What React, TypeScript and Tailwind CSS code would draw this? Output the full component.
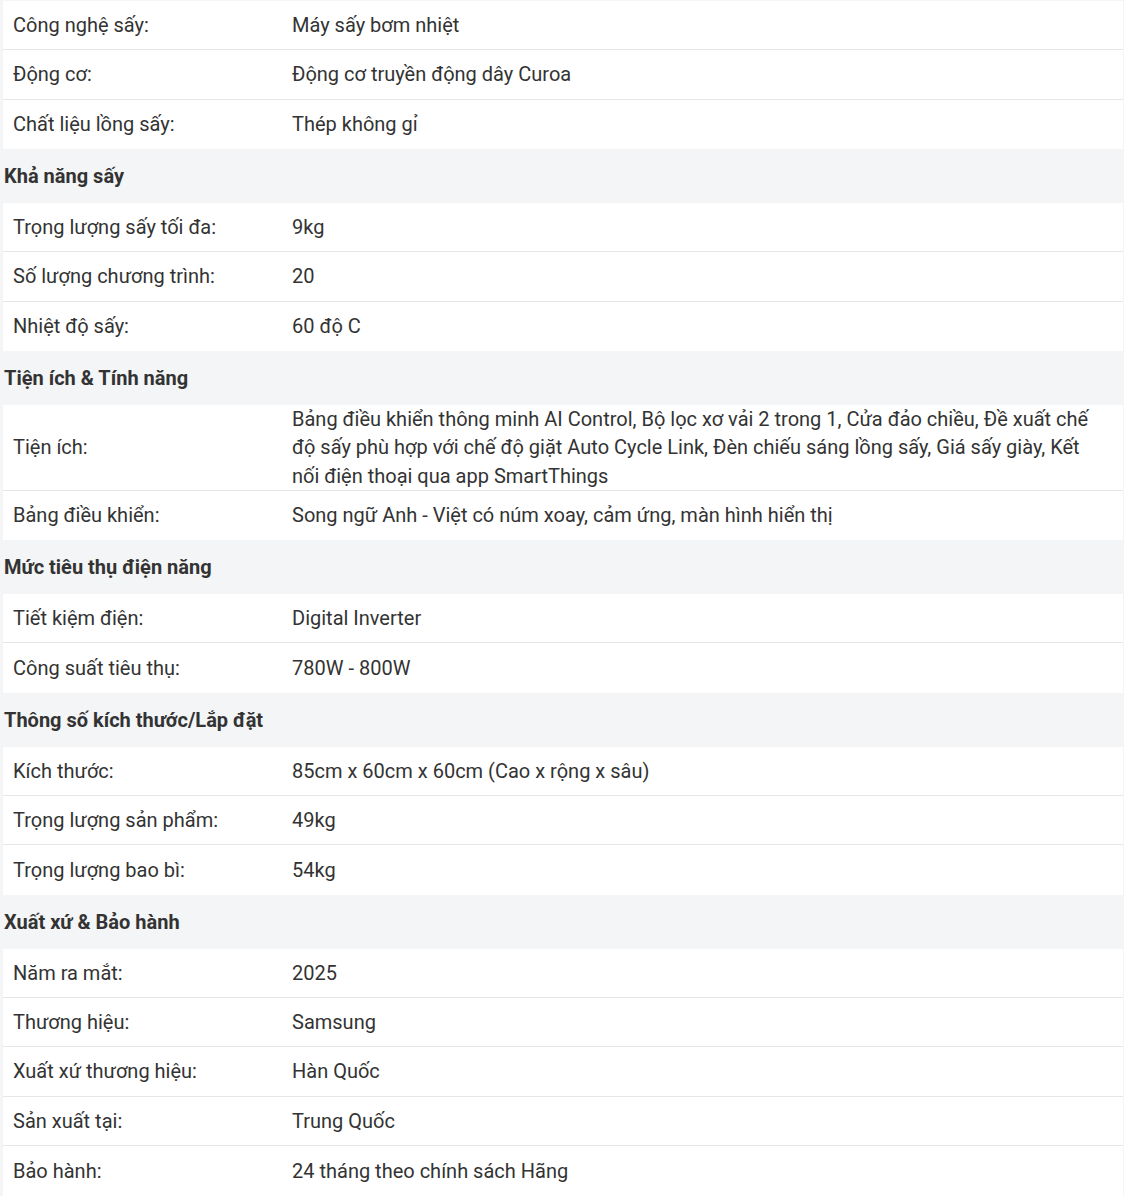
const sections: { title?: string; rows: [string, string][] }[] = [
  {
    rows: [
      ["Công nghệ sấy:", "Máy sấy bơm nhiệt"],
      ["Động cơ:", "Động cơ truyền động dây Curoa"],
      ["Chất liệu lồng sấy:", "Thép không gỉ"],
    ],
  },
  {
    title: "Khả năng sấy",
    rows: [
      ["Trọng lượng sấy tối đa:", "9kg"],
      ["Số lượng chương trình:", "20"],
      ["Nhiệt độ sấy:", "60 độ C"],
    ],
  },
  {
    title: "Tiện ích & Tính năng",
    rows: [
      [
        "Tiện ích:",
        "Bảng điều khiển thông minh AI Control, Bộ lọc xơ vải 2 trong 1, Cửa đảo chiều, Đề xuất chế độ sấy phù hợp với chế độ giặt Auto Cycle Link, Đèn chiếu sáng lồng sấy, Giá sấy giày, Kết nối điện thoại qua app SmartThings",
      ],
      ["Bảng điều khiển:", "Song ngữ Anh - Việt có núm xoay, cảm ứng, màn hình hiển thị"],
    ],
  },
  {
    title: "Mức tiêu thụ điện năng",
    rows: [
      ["Tiết kiệm điện:", "Digital Inverter"],
      ["Công suất tiêu thụ:", "780W - 800W"],
    ],
  },
  {
    title: "Thông số kích thước/Lắp đặt",
    rows: [
      ["Kích thước:", "85cm x 60cm x 60cm (Cao x rộng x sâu)"],
      ["Trọng lượng sản phẩm:", "49kg"],
      ["Trọng lượng bao bì:", "54kg"],
    ],
  },
  {
    title: "Xuất xứ & Bảo hành",
    rows: [
      ["Năm ra mắt:", "2025"],
      ["Thương hiệu:", "Samsung"],
      ["Xuất xứ thương hiệu:", "Hàn Quốc"],
      ["Sản xuất tại:", "Trung Quốc"],
      ["Bảo hành:", "24 tháng theo chính sách Hãng"],
    ],
  },
];

export default function App() {
  return (
    <div className="w-[1126px] min-h-[1196px] bg-white font-['Roboto',sans-serif] text-[20px] text-[#333]">
      <div className="w-[1124px] bg-[#f4f5f7] pt-px pb-[2px]">
        {sections.map((s, i) => (
          <div key={i}>
            {s.title && (
              <div className="h-[53.8px] flex items-center pl-[4px] font-bold">{s.title}</div>
            )}
            <div className="ml-[3px] mr-px bg-white">
              {s.rows.map(([label, value], j) => (
                <div
                  key={label}
                  className={`flex items-center min-h-[49.4px] leading-[28.3px] ${
                    j < s.rows.length - 1 ? "border-b border-[#e6e6e6]" : ""
                  }`}
                >
                  <div className="w-[289px] shrink-0 pl-[10px]">{label}</div>
                  <div className="flex-1 pr-[30px]">{value}</div>
                </div>
              ))}
            </div>
          </div>
        ))}
      </div>
    </div>
  );
}
